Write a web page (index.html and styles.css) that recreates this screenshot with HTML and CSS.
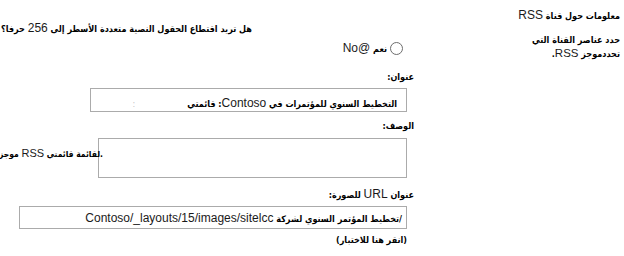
FILE: index.html
```html
<!DOCTYPE html>
<html lang="ar" dir="rtl">
<head>
    <meta charset="UTF-8">
    <title>إعدادات RSS</title>
    <link rel="stylesheet" href="styles.css">
</head>
<body>
<div class="page">
    <div class="section-info">
        <div class="section-title">معلومات حول قناة <span class="en">RSS</span></div>
        <div class="section-desc">حدد عناصر القناة التي<br>تحددموجز <span class="en">RSS</span>.</div>
    </div>

    <div class="fields">
        <div class="question">هل تريد اقتطاع الحقول النصية متعددة الأسطر إلى <span class="en">256</span> حرفا؟</div>
        <div class="choice">
            <span class="radio"></span>
            <span>نعم <span class="en">@No</span></span>
        </div>

        <div class="field-label">عنوان:</div>
        <div class="box title-box">التخطيط السنوي للمؤتمرات في <span class="en">Contoso</span>: قائمتي<span class="ghost">:</span></div>

        <div class="field-label label-desc">الوصف:</div>
        <div class="desc-row">
            <div class="box desc-box"></div>
            <span class="desc-text">.لقائمة قائمتي <span class="en">RSS</span> موجز</span>
        </div>

        <div class="field-label label-url">عنوان <span class="en">URL</span> للصورة:</div>
        <div class="box url-box">/تخطيط المؤتمر السنوي لشركة <span class="en">Contoso/_layouts/15/images/sitelcc</span></div>
        <div class="test-link">(انقر هنا للاختبار)</div>
    </div>
</div>
</body>
</html>
```

FILE: styles.css
```css
body {
    margin: 0;
    font-family: "DejaVu Sans Condensed", "DejaVu Sans", sans-serif;
    font-stretch: condensed;
    font-weight: bold;
    font-size: 9px;
    color: #000;
    background: #fff;
}
.en {
    font-family: "Liberation Sans", Arial, sans-serif;
    font-stretch: normal;
    font-weight: normal;
    font-size: 12px;
    color: #1a1a1a;
}
.page {
    display: flex;
    width: 624px;
}
.section-info {
    flex-shrink: 0;
    width: 200px;
    padding: 7px 4px 0 0;
    box-sizing: border-box;
}
.section-title {
    line-height: 16px;
}
.section-desc {
    margin-top: 10px;
    line-height: 13px;
}
.section-desc .en {
    font-size: 11.5px;
}
.fields {
    flex: 1;
    min-width: 0;
    padding-right: 10px;
}
.question {
    margin-top: 20px;
    padding-left: 1px;
    line-height: 16px;
    text-align: left;
    white-space: nowrap;
}
.choice {
    display: flex;
    align-items: center;
    gap: 3px;
    height: 16px;
    margin: 3px 11px 0 0;
}
.radio {
    width: 13px;
    height: 13px;
    border: 1px solid #6d6d6d;
    border-radius: 50%;
    box-sizing: border-box;
    background: #fff;
}
.field-label {
    line-height: 16px;
    margin-top: 13px;
}
.label-desc {
    margin-top: 6px;
}
.label-url {
    margin-top: 8px;
}
.box {
    border: 1px solid #ababab;
    box-sizing: border-box;
    margin-right: 7px;
    white-space: nowrap;
}
.title-box {
    width: 317px;
    height: 24px;
    margin-top: 3px;
    padding: 6px 9px 0 0;
    line-height: 16px;
}
.ghost {
    color: #c4c4c4;
    font-weight: normal;
    margin-right: 52px;
}
.desc-row {
    display: flex;
    align-items: flex-start;
    margin-top: 4px;
}
.desc-box {
    flex-shrink: 0;
    width: 309px;
    height: 40px;
}
.desc-text {
    margin: 8px -5px 0 0;
    line-height: 14px;
    white-space: nowrap;
    font-size: 8.5px;
}
.desc-text .en {
    font-size: 11px;
}
.url-box {
    width: 388px;
    height: 23px;
    margin-top: 3px;
    padding: 3px 4px 0 0;
    line-height: 16px;
}
.test-link {
    margin: 3px 7px 0 0;
    line-height: 16px;
}
```
